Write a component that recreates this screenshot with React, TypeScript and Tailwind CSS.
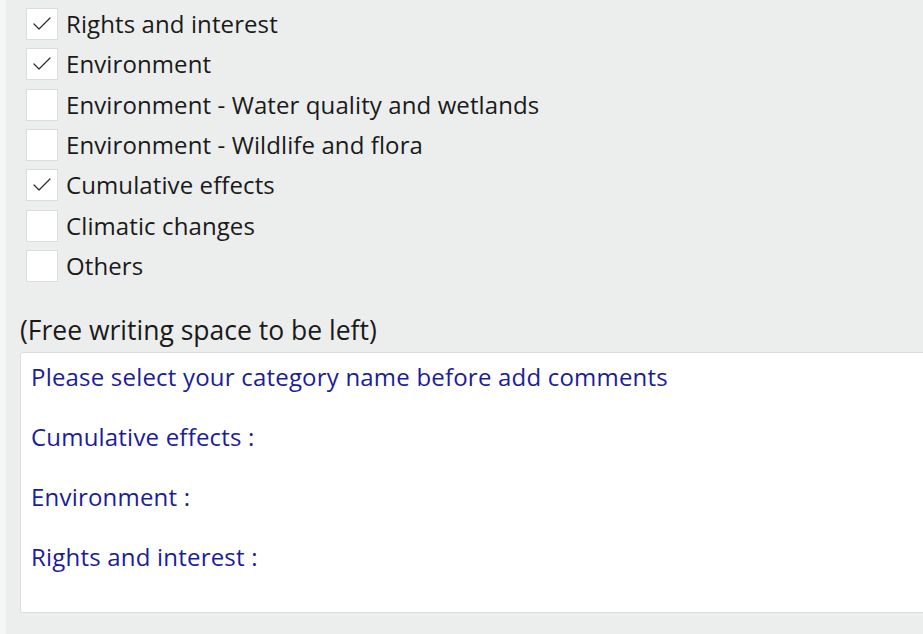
import { Check } from "lucide-react";

const items = [
  { label: "Rights and interest", checked: true },
  { label: "Environment", checked: true },
  { label: "Environment - Water quality and wetlands", checked: false },
  { label: "Environment - Wildlife and flora", checked: false },
  { label: "Cumulative effects", checked: true },
  { label: "Climatic changes", checked: false },
  { label: "Others", checked: false },
];

const comments = ["Please select your category name before add comments", "Cumulative effects :", "Environment :", "Rights and interest :"];

export default function App() {
  return (
    <div className="flex h-[634px] w-[923px] overflow-hidden bg-[#eceeed] font-['Open_Sans',sans-serif]">
      <div className="w-[6px] shrink-0 bg-[#f5f6f6]" />
      <div className="flex flex-1 flex-col pl-[14px] pt-[8px]">
        <div className="flex flex-col gap-[8.33px] pl-[6px]">
          {items.map((item) => (
            <label key={item.label} className="flex h-[32px] items-center gap-[8px]">
              <span className="flex h-[32px] w-[32px] shrink-0 items-center justify-center border border-[#dcdcdc] bg-white">
                {item.checked && <Check size={24} strokeWidth={1.2} className="text-[#2a2a2a]" />}
              </span>
              <span className="text-[24px] leading-none tracking-[0.1px] text-[#1a1a1a]">{item.label}</span>
            </label>
          ))}
        </div>
        <div className="mt-[34px] h-[28px] text-[26.5px] leading-[28px] text-[#1a1a1a]">(Free writing space to be left)</div>
        <div className="mt-[8px] h-[261px] w-[960px] shrink-0 rounded-[3px] border border-[#dcdcdc] bg-white px-[10px] pt-[9px]">
          {comments.map((c) => (
            <div key={c} className="mb-[30px] h-[30px] text-[24px] leading-[30px] tracking-[0.2px] text-[#1c1c9a]">
              {c}
            </div>
          ))}
        </div>
      </div>
    </div>
  );
}
